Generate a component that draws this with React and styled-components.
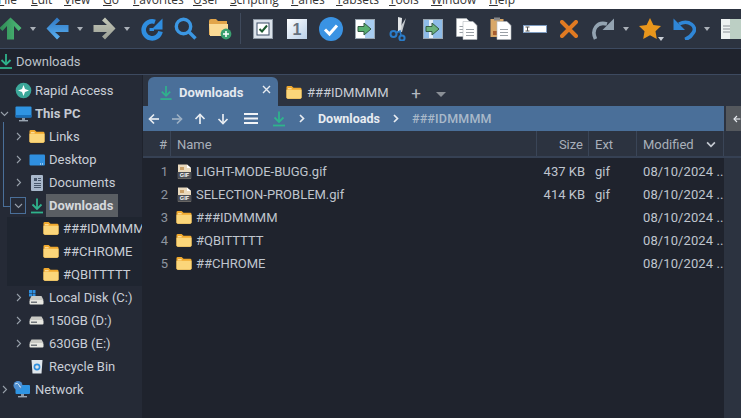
import React from 'react';
import styled, { createGlobalStyle } from 'styled-components';

const Global = createGlobalStyle`
  html, body { margin: 0; padding: 0; height: 100%; overflow: hidden; background: #252a36; }
  #root { height: 100%; }
  * { box-sizing: border-box; }
`;
const Page = styled.div`
  width: 741px; height: 418px; display: flex; flex-direction: column; overflow: hidden;
  font-family: Roboto, "Open Sans", sans-serif; font-size: 13px; color: #c9ced6; background: #252a36;
`;
const MenuBar = styled.div`
  height: 9px; flex: none; background: #fff; display: flex; align-items: flex-end; overflow: hidden;
  font-family: "Open Sans", sans-serif; font-size: 12px; color: #333;
`;
const MenuItem = styled.span`
  flex: none; width: ${p => p.$w}px; margin-left: ${p => p.$ml || 0}px; line-height: 16px; margin-bottom: 1px; white-space: nowrap;
  &::first-letter { text-decoration: underline; }
`;
const Toolbar = styled.div`
  height: 40px; flex: none; background: #2c3340; border-bottom: 1px solid #3d4a60; display: flex; align-items: center; overflow: hidden;
`;
const Tool = styled.div`
  flex: none; position: relative; width: ${p => p.$w}px; margin-left: ${p => p.$ml || 0}px; height: 24px; display: flex; align-items: center; justify-content: center;
  svg { display: block; flex: none; }
`;
const Caret = styled.span`
  flex: none; margin-left: ${p => p.$ml}px; width: 0; height: 0; border-left: 3.5px solid transparent; border-right: 3.5px solid transparent; border-top: 4px solid #aab0b8;
`;
const StarCaret = styled(Caret)`
  position: absolute; right: -3px; bottom: 0; margin: 0; border-top-color: #c9ced6;
`;
const ToolSep = styled.span`
  flex: none; width: 1px; height: 31px; background: #3f4a5c; margin-left: ${p => p.$ml}px;
`;
const LocationBar = styled.div`
  height: 26px; flex: none; background: #1f232d; border-bottom: 1px solid #3d4a60; display: flex; align-items: center; gap: 4px; color: #bcc2ca; font-size: 13px;
`;
const Main = styled.div`
  flex: 1; min-height: 0; display: flex;
`;
const Sidebar = styled.nav`
  width: 143px; flex: none; padding-top: 4px; background: #252a36; border-right: 1px solid #1f232d; position: relative; overflow: hidden;
`;
const TreeRow = styled.div`
  height: 23px; display: flex; align-items: center; white-space: nowrap; padding-left: ${p => p.$indent}px; gap: ${p => p.$gap ?? 6}px;
  svg { flex: none; }
`;
const Nested = styled.div`
  background: #1f2530; margin-left: 7px;
`;
const Chevron = styled.span`
  flex: none; width: 12px; display: flex; justify-content: center; margin-right: ${p => p.$mr ?? 0}px; margin-left: ${p => p.$ml ?? 0}px;
`;
const TreeLine = styled.span`
  position: absolute; left: 3px; top: 47px; width: 7px; height: 85px; border-left: 1px solid #4a6f99; border-bottom: 1px solid #4a6f99;
`;
const ExpandBox = styled.span`
  flex: none; width: 16px; height: 17px; margin-left: 3px; margin-right: 5px; border: 1px solid #4a6f99; display: flex; align-items: center; justify-content: center;
`;
const Label = styled.span`
  margin-left: ${p => p.$ml}px;
`;
const Bold = styled.b`
  font-weight: 700; color: #c5cad2; margin-left: 3px;
`;
const SelectedLabel = styled.b`
  font-weight: 700; background: #5a5e63; color: #d5d8dc; height: 23px; line-height: 23px; padding: 0 0 0 3px; margin-left: 3px; width: 72px;
`;
const Content = styled.section`
  flex: 1; min-width: 0; display: flex; flex-direction: column; background: #2c3340;
`;
const TabStrip = styled.div`
  height: 31px; flex: none; display: flex; align-items: flex-end; padding-left: 5px;
`;
const ActiveTab = styled.div`
  width: 130px; height: 29px; flex: none; background: #4a6f99; border-radius: 6px 6px 0 0; display: flex; align-items: center; padding: 2px 0 0 12px; gap: 7px; font-weight: 700; color: #e4e9ef; position: relative;
`;
const TabClose = styled.span`
  position: absolute; right: 7px; top: 8px; display: flex;
`;
const Tab = styled.div`
  flex: none; width: 125px; height: 29px; display: flex; align-items: center; gap: 5px; padding: 2px 0 0 8px; color: #c9ced6; font-size: 13px;
`;
const TabPlus = styled.span`
  flex: none; width: 26px; text-align: center; height: 29px; line-height: 33px; font-size: 17px; color: #b4b9c1;
`;
const TabMenuCaret = styled.span`
  flex: none; margin: 0 0 9px 7px; width: 0; height: 0; border-left: 5px solid transparent; border-right: 5px solid transparent; border-top: 5px solid #8a8f96;
`;
const Crumbs = styled.div`
  height: 25px; flex: none; display: flex;
`;
const CrumbBar = styled.div`
  width: 581px; flex: none; background: #4a6f99; display: flex; align-items: center; color: #e8ecf1;
  svg { flex: none; display: block; }
`;
const CrumbSlot = styled.span`
  flex: none; width: ${p => p.$w}px; margin-left: ${p => p.$ml || 0}px; display: flex; justify-content: center;
`;
const CrumbText = styled.span`
  flex: none; font-weight: ${p => p.$dim ? 500 : 700}; color: ${p => p.$dim ? '#a9b9c9' : '#e8ecf1'}; font-size: 12.5px; letter-spacing: ${p => p.$dim ? '.2px' : 0};
  margin-left: ${p => p.$ml}px;
`;
const CrumbBack = styled.div`
  margin-left: 2px; flex: 1; background: #54585d; display: flex; align-items: center; padding-left: 7px; overflow: hidden;
`;
const Grid = styled.div`
  flex: 1; display: flex; flex-direction: column; min-height: 0;
`;
const HeadRow = styled.div`
  height: 27px; flex: none; display: grid; grid-template-columns: 28px 366px 52px 48px 87px; border-bottom: 2px solid #364154; color: #a9b0ba;
`;
const HeadCell = styled.div`
  display: flex; align-items: center; padding: 2px ${p => p.$pr ?? 6}px 0 6px; border-right: 1px solid #3a4557; justify-content: ${p => p.$right ? 'flex-end' : 'flex-start'}; position: relative;
`;
const SortMark = styled.span`
  position: absolute; right: 7px; top: 8px; display: flex;
`;
const Body = styled.div`
  width: 581px; flex: 1; background: #1f232d; padding-top: 2px;
`;
const Row = styled.div`
  height: 23px; display: grid; grid-template-columns: 28px 366px 52px 48px 87px; align-items: center; white-space: nowrap;
`;
const Num = styled.span`
  text-align: right; padding-right: 3px; color: #8e95a0;
`;
const NameCell = styled.span`
  display: flex; align-items: center; gap: ${p => p.$gap}px; padding-left: ${p => p.$pad}px; color: #bfc5cd;
  svg { flex: none; }
`;
const SizeCell = styled.span`
  text-align: right; padding-right: 4px; color: #bfc5cd;
`;
const ExtCell = styled.span`
  padding-left: 6px; color: #bfc5cd;
`;
const DateCell = styled.span`
  padding-left: 6px; color: #bfc5cd; overflow: hidden; letter-spacing: .1px;
`;

const Folder = ({ s = 17 }) => (
  <svg width={s} height={s * 15 / 17} viewBox="0 0 17 15">
    <path d="M0.5 2.5 Q0.5 1 2 1 H6 L8 3 H15 Q16.5 3 16.5 4.5 V13 Q16.5 14.5 15 14.5 H2 Q0.5 14.5 0.5 13Z" fill="#f0a92e" />
    <path d="M0.5 5 H16.5 V13 Q16.5 14.5 15 14.5 H2 Q0.5 14.5 0.5 13Z" fill="#fbd67a" />
    <path d="M2 4 H6" stroke="#fff1c4" strokeWidth="1" />
  </svg>
);
const Dl = ({ w = 12, h = 15, c = '#2fb38c' }) => (
  <svg width={w} height={h} viewBox="0 0 12 15" fill="none" stroke={c} strokeWidth="1.8">
    <path d="M6 0 V10.5" />
    <path d="M1.5 6 L6 10.5 L10.5 6" />
    <path d="M0 14 H12" />
  </svg>
);
const ChevR = ({ c = '#98a0aa', s = 9, w = 1.1 }) => (
  <svg width={s} height={s} viewBox="0 0 9 9" fill="none" stroke={c} strokeWidth={w}><path d="M3 1 L6.5 4.5 L3 8" /></svg>
);
const ChevD = ({ c = '#98a0aa', w = 1.1, s = 9 }) => (
  <svg width={s} height={s} viewBox="0 0 9 9" fill="none" stroke={c} strokeWidth={w}><path d="M1 3 L4.5 6.5 L8 3" /></svg>
);
const Drive = () => (
  <svg width="15" height="9" viewBox="0 0 15 9">
    <path d="M2.5 0.5 H12.5 L14.5 4 H0.5Z" fill="#c9c9c4" />
    <rect x="0.5" y="4" width="14" height="4.5" rx="1" fill="#e8e8e2" />
    <rect x="2" y="5.5" width="6" height="1.5" fill="#70757a" />
  </svg>
);
const Gif = () => (
  <svg width="15" height="15" viewBox="0 0 15 15">
    <path d="M1 0.5 H10 L14 4 V14.5 H1Z" fill="#e9d9bd" />
    <path d="M10 0.5 V4 H14Z" fill="#fff" />
    <rect x="3" y="3" width="4" height="3" fill="#c9a068" />
    <rect x="0.5" y="8" width="14" height="6.5" fill="#4a4d52" />
    <text x="7.5" y="13.4" textAnchor="middle" fontSize="5.6" fontWeight="700" fontFamily="Liberation Sans" fill="#fff">GIF</text>
  </svg>
);
const Arrow = ({ dir = 'left', c, s = 12, w = 1.7 }) => {
  const rot = { left: 0, right: 180, up: 90, down: 270 }[dir];
  return (
    <svg width={s} height={s} viewBox="0 0 12 12" fill="none" stroke={c} strokeWidth={w} style={{ transform: `rotate(${rot}deg)` }}>
      <path d="M11 6 H1.5" /><path d="M6 1.5 L1.5 6 L6 10.5" />
    </svg>
  );
};
const BigArrow = ({ id, c1, c2, rot = 0 }) => (
  <svg width="23" height="23" viewBox="0 0 23 23" style={{ transform: `rotate(${rot}deg)` }}>
    <defs>
      <linearGradient id={id} x1="0" y1="0" x2="0" y2="1"><stop offset="0" stopColor={c1} /><stop offset="1" stopColor={c2} /></linearGradient>
    </defs>
    <path d="M0.5 11.5 L11 0.5 L14 3.5 L9 8 H22.5 V15 H9 L14 19.5 L11 22.5Z" fill={`url(#${id})`} />
  </svg>
);
const Refresh = () => (
  <svg width="24" height="24" viewBox="0 0 24 24" fill="none">
    <path d="M20.5 14.5 A8.5 8.5 0 1 1 15 4.8" stroke="#2f8ee0" strokeWidth="4.6" />
    <path d="M22.5 1.5 V12.5 H11.5Z" fill="#2f8ee0" />
    <path d="M9.5 12.5 H14" stroke="#2f8ee0" strokeWidth="3" />
  </svg>
);
const Search = () => (
  <svg width="23" height="23" viewBox="0 0 23 23" fill="none" stroke="#3b97e3">
    <circle cx="9.5" cy="9.5" r="7.2" strokeWidth="3.4" />
    <path d="M15 15 L21.5 21.5" strokeWidth="3.4" />
  </svg>
);
const FolderPlus = () => (
  <svg width="24" height="22" viewBox="0 0 24 22">
    <path d="M1 3 Q1 1 3 1 H8 L10 3 H19 V17 H1Z" fill="#e2a54a" />
    <path d="M1 6 H20 V18 H2Z" fill="#fbdb96" />
    <circle cx="18" cy="16" r="5.4" fill="#3ba070" />
    <path d="M18 13 V19 M15 16 H21" stroke="#fff" strokeWidth="1.6" />
  </svg>
);
const CheckBox = () => (
  <svg width="20" height="20" viewBox="0 0 20 20">
    <rect x="0.5" y="0.5" width="19" height="19" fill="#dbe2ea" stroke="#8f9aa6" />
    <rect x="4" y="4" width="12" height="12" fill="#fff" stroke="#3a4c66" />
    <path d="M6.5 10 L9 12.5 L14 6.5" fill="none" stroke="#1c5a30" strokeWidth="2" />
  </svg>
);
const One = () => (
  <svg width="20" height="20" viewBox="0 0 20 20">
    <defs><linearGradient id="onebg" x1="0" y1="0" x2="1" y2="1"><stop offset="0" stopColor="#fff" /><stop offset="1" stopColor="#b9cfe8" /></linearGradient></defs>
    <rect width="20" height="20" fill="url(#onebg)" />
    <text x="10" y="16" textAnchor="middle" fontSize="16" fontWeight="700" fontFamily="Liberation Sans" fill="#66717e">1</text>
  </svg>
);
const CheckCircle = () => (
  <svg width="24" height="24" viewBox="0 0 24 24">
    <circle cx="12" cy="12" r="12" fill="#3a93e3" />
    <path d="M6 12.5 L10.5 17 L18 8.5" fill="none" stroke="#fff" strokeWidth="3" />
  </svg>
);
const DocArrow = () => (
  <svg width="20" height="20" viewBox="0 0 20 20">
    <rect x="0.5" y="0.5" width="19" height="19" fill="#a8cdf0" stroke="#9aa7b2" />
    <rect x="1" y="1" width="9" height="18" fill="#fff" />
    <path d="M3 7.5 H9 V4 L16 10 L9 16 V12.5 H3Z" fill="#58b070" stroke="#335a42" />
  </svg>
);
const Scissors = () => (
  <svg width="20" height="24" viewBox="0 0 20 24" fill="none">
    <path d="M8 15 L17 1 L13 15Z" fill="#c3c8cc" />
    <path d="M9 0 L13 1 L12 15 L9 15Z" fill="#e3e6e8" />
    <circle cx="4.5" cy="17" r="3" stroke="#2a7cc9" strokeWidth="2" />
    <circle cx="13" cy="21" r="2.6" stroke="#2a7cc9" strokeWidth="2" />
    <path d="M7 16 L11 14 L12 18" stroke="#2a7cc9" strokeWidth="1.6" />
  </svg>
);
const Sync = () => (
  <svg width="20" height="20" viewBox="0 0 20 20">
    <rect x="0.5" y="0.5" width="19" height="19" fill="#8ebce8" stroke="#9aa7b2" />
    <rect x="6" y="1" width="4" height="18" fill="#e4eef7" />
    <path d="M3 7.5 H9 V4 L16 10 L9 16 V12.5 H3Z" fill="#6bb27c" stroke="#335a42" />
  </svg>
);
const Page1 = ({ x, y }) => (
  <g>
    <path d={`M${x} ${y} H${x + 10} L${x + 14} ${y + 4} V${y + 18} H${x}Z`} fill="#fff" stroke="#b3b8bc" strokeWidth=".6" />
    <path d={`M${x + 3} ${y + 8} H${x + 11} M${x + 3} ${y + 11} H${x + 11} M${x + 3} ${y + 14} H${x + 11}`} stroke="#9aa0a6" />
  </g>
);
const Copy = () => (
  <svg width="22" height="22" viewBox="0 0 22 22"><Page1 x={0.5} y={0.5} /><Page1 x={7} y={3.5} /></svg>
);
const Paste = () => (
  <svg width="22" height="23" viewBox="0 0 22 23">
    <rect x="0.5" y="2" width="13" height="18" fill="#d9a868" />
    <rect x="4" y="0.5" width="6" height="3" fill="#888" />
    <rect x="3" y="14" width="4" height="4" fill="#a85e30" />
    <Page1 x={7} y={4.5} />
  </svg>
);
const Rename = () => (
  <svg width="24" height="8" viewBox="0 0 24 8">
    <rect x="0.5" y="0.5" width="23" height="7" fill="#fff" stroke="#7e9cc0" />
    <path d="M2.5 2 H6.5 M2.5 6 H6.5 M4.5 2 V6" stroke="#555" />
  </svg>
);
const Cross = () => (
  <svg width="18" height="18" viewBox="0 0 18 18"><path d="M2 2 L16 16 M16 2 L2 16" stroke="#e07a22" strokeWidth="4" strokeLinecap="round" /></svg>
);
const Redo = () => (
  <svg width="23" height="22" viewBox="0 0 23 22" fill="none">
    <path d="M3.5 21 C-1 12 5 3 15 6" stroke="#93a3b1" strokeWidth="3.6" />
    <path d="M22 0.5 V12 H10.5Z" fill="#93a3b1" />
  </svg>
);
const Undo = () => (
  <svg width="23" height="22" viewBox="0 0 23 22" fill="none">
    <path d="M6 6 C16 1 25 9 20 15 C18 18.5 15 20.5 12 21.5" stroke="#2f86d6" strokeWidth="3.6" />
    <path d="M0.5 0.5 V12 H12Z" fill="#2f86d6" />
  </svg>
);
const Star = () => (
  <svg width="22" height="21" viewBox="0 0 22 21"><path d="M11 0 L14.4 7 L22 8 L16.5 13.3 L17.8 21 L11 17.3 L4.2 21 L5.5 13.3 L0 8 L7.6 7Z" fill="#e8961c" /></svg>
);
const DocPanel = () => (
  <svg width="20" height="20" viewBox="0 0 20 20">
    <rect width="20" height="20" fill="#eef2f2" />
    <rect x="9" width="11" height="20" fill="#bccfc4" />
    <path d="M2 7 H9 M2 10 H9 M2 13 H9" stroke="#8a9096" />
  </svg>
);
const Badge = () => (
  <svg width="17" height="17" viewBox="0 0 17 17">
    <circle cx="8.5" cy="8.5" r="7.8" fill="#3ca89a" />
    <path d="M8.5 3 L10 7 L14 8.5 L10 10 L8.5 14 L7 10 L3 8.5 L7 7Z" fill="#fff" />
  </svg>
);
const Monitor = () => (
  <svg width="17" height="16" viewBox="0 0 17 16">
    <rect x="0.5" y="0.5" width="16" height="11" rx="1" fill="#2f94e2" />
    <path d="M0.5 9 H16.5 V11.5 H0.5Z" fill="#1a6fb8" />
    <rect x="7" y="12" width="3" height="2" fill="#8a97a6" />
    <rect x="4" y="14" width="9" height="1.4" fill="#9aa6b3" />
  </svg>
);
const DesktopIcon = () => (
  <svg width="16" height="12" viewBox="0 0 16 12">
    <rect x="0.5" y="0.5" width="15.5" height="11" rx="1" fill="#2f8fdf" />
    <rect x="11" y="9.5" width="1" height="1" fill="#fff" /><rect x="13" y="9.5" width="1" height="1" fill="#fff" />
  </svg>
);
const DocsIcon = () => (
  <svg width="12" height="16" viewBox="0 0 12 16">
    <rect width="12" height="16" rx="1" fill="#a9b8cb" />
    <rect x="3" y="3" width="3" height="3" fill="#47566b" />
    <path d="M7 3.5 H10 M7 5.5 H10 M3 8.5 H10 M3 10.5 H10 M3 12.5 H10" stroke="#47566b" />
  </svg>
);
const SysDrive = () => (
  <svg width="15" height="15" viewBox="0 0 15 15">
    <rect x="0" y="0" width="3" height="3" fill="#2f8fdf" /><rect x="3.5" y="0" width="3" height="3" fill="#2f8fdf" />
    <rect x="0" y="3.5" width="3" height="3" fill="#2f8fdf" /><rect x="3.5" y="3.5" width="3" height="3" fill="#2f8fdf" />
    <path d="M2.5 6 H12.5 L14.5 10 H0.5Z" fill="#c9c9c4" />
    <rect x="0.5" y="10" width="14" height="4.5" rx="1" fill="#e8e8e2" />
    <rect x="2" y="11.5" width="6" height="1.5" fill="#70757a" />
  </svg>
);
const Bin = () => (
  <svg width="12" height="15" viewBox="0 0 12 15">
    <path d="M0.5 1 H11.5 L10.5 14.5 H1.5Z" fill="#dfe6ec" />
    <circle cx="6" cy="8" r="2.6" fill="none" stroke="#2f8fdf" strokeWidth="1.6" />
  </svg>
);
const Net = () => (
  <svg width="17" height="17" viewBox="0 0 17 17">
    <rect x="2.5" y="4" width="14.5" height="9" rx="1" fill="#2f94e2" />
    <rect x="8" y="13" width="3" height="2" fill="#8a97a6" />
    <rect x="5" y="15" width="9" height="1.4" fill="#9aa6b3" />
    <circle cx="5" cy="4.5" r="4.5" fill="#4e8ed0" />
    <path d="M2 3 Q5 1 6 4 T8 6" stroke="#cfe3f5" fill="none" />
  </svg>
);

const menus = [['File', 33, -2], ['Edit', 33], ['View', 39], ['Go', 30], ['Favorites', 60], ['User', 37], ['Scripting', 61], ['Panes', 45], ['Tabsets', 53], ['Tools', 42], ['Window', 58], ['Help', 40]];

const tools = [
  [<BigArrow key="u" id="gu" c1="#4ebb78" c2="#2f8a55" rot={90} />, 23, -1], 'c',
  [<BigArrow key="b" id="gb" c1="#2f78c4" c2="#5ab0f0" />, 23, 10], 'c',
  [<BigArrow key="f" id="gf" c1="#9a9e94" c2="#c4c8b8" rot={180} />, 23, 10], 'c',
  [<Refresh key="r" />, 24, 10],
  [<Search key="s" />, 23, 10],
  [<FolderPlus key="fp" />, 24, 11],
  'sep',
  [<CheckBox key="cb" />, 20, 12],
  [<One key="o" />, 20, 14],
  [<CheckCircle key="cc" />, 24, 12],
  [<DocArrow key="da" />, 20, 12],
  [<Scissors key="sc" />, 20, 14],
  [<Sync key="sy" />, 20, 14],
  [<Copy key="cp" />, 22, 13],
  [<Paste key="pa" />, 22, 12],
  [<Rename key="rn" />, 24, 11],
  [<Cross key="x" />, 18, 13],
  [<Redo key="rd" />, 23, 14], 'c',
  [<React.Fragment key="st"><Star /><StarCaret /></React.Fragment>, 22, 10],
  [<Undo key="ud" />, 23, 12], 'c',
  [<DocPanel key="dp" />, 20, 11],
];

const files = [
  ['1', 'LIGHT-MODE-BUGG.gif', '437 KB', 'gif'],
  ['2', 'SELECTION-PROBLEM.gif', '414 KB', 'gif'],
  ['3', '###IDMMMM'],
  ['4', '#QBITTTTT'],
  ['5', '##CHROME'],
];

export default function App() {
  return (
    <Page>
      <Global />
      <MenuBar>
        {menus.map(([m, w, o]) => <MenuItem key={m} $w={w} $ml={o}>{m}</MenuItem>)}
      </MenuBar>
      <Toolbar>
        {tools.map((t, i) => {
          if (t === 'c') return <Caret key={i} $ml={8} />;
          if (t === 'sep') return <ToolSep key={i} $ml={8} />;
          return <Tool key={i} $w={t[1]} $ml={t[2]}>{t[0]}</Tool>;
        })}
      </Toolbar>
      <LocationBar>
        <Dl />
        <span>Downloads</span>
      </LocationBar>
      <Main>
        <Sidebar>
          <TreeLine />
          <TreeRow $indent={15} $gap={3}><Badge /><span>Rapid Access</span></TreeRow>
          <TreeRow $indent={0} $gap={0}><Chevron $mr={5} $ml={-2}><ChevD /></Chevron><Monitor /><Bold>This PC</Bold></TreeRow>
          <TreeRow $indent={12} $gap={0}><Chevron $mr={5}><ChevR /></Chevron><Folder s={16} /><Label $ml={4}>Links</Label></TreeRow>
          <TreeRow $indent={12} $gap={0}><Chevron $mr={5}><ChevR /></Chevron><DesktopIcon /><Label $ml={4}>Desktop</Label></TreeRow>
          <TreeRow $indent={12} $gap={0}><Chevron $mr={7}><ChevR /></Chevron><DocsIcon /><Label $ml={6}>Documents</Label></TreeRow>
          <TreeRow $indent={7} $gap={0}>
            <ExpandBox><ChevD /></ExpandBox>
            <Dl h={16} />
            <SelectedLabel>Downloads</SelectedLabel>
          </TreeRow>
          <Nested>
            {['###IDMMMM', '##CHROME', '#QBITTTTT'].map(n => (
              <TreeRow key={n} $indent={36} $gap={4}><Folder s={16} /><span>{n}</span></TreeRow>
            ))}
          </Nested>
          <TreeRow $indent={12} $gap={0}><Chevron $mr={5}><ChevR /></Chevron><SysDrive /><Label $ml={5}>Local Disk (C:)</Label></TreeRow>
          <TreeRow $indent={12} $gap={0}><Chevron $mr={5}><ChevR /></Chevron><Drive /><Label $ml={5}>150GB (D:)</Label></TreeRow>
          <TreeRow $indent={12} $gap={0}><Chevron $mr={5}><ChevR /></Chevron><Drive /><Label $ml={5}>630GB (E:)</Label></TreeRow>
          <TreeRow $indent={31} $gap={6}><Bin /><span>Recycle Bin</span></TreeRow>
          <TreeRow $indent={0} $gap={0}><Chevron $mr={3} $ml={-2}><ChevR /></Chevron><Net /><Label $ml={5}>Network</Label></TreeRow>
        </Sidebar>
        <Content>
          <TabStrip>
            <ActiveTab>
              <Dl h={14} /><span>Downloads</span>
              <TabClose><svg width="9" height="9" viewBox="0 0 9 9"><path d="M1 1 L8 8 M8 1 L1 8" stroke="#e8ecf1" strokeWidth="1.4" /></svg></TabClose>
            </ActiveTab>
            <Tab><Folder s={16} /><span>###IDMMMM</span></Tab>
            <TabPlus>+</TabPlus>
            <TabMenuCaret />
          </TabStrip>
          <Crumbs>
            <CrumbBar>
              <CrumbSlot $w={12} $ml={5}><Arrow c="#e8ecf1" /></CrumbSlot>
              <CrumbSlot $w={12} $ml={11}><Arrow dir="right" c="#9db0c4" /></CrumbSlot>
              <CrumbSlot $w={12} $ml={11}><Arrow dir="up" c="#e8ecf1" /></CrumbSlot>
              <CrumbSlot $w={12} $ml={11}><Arrow dir="down" c="#e8ecf1" /></CrumbSlot>
              <CrumbSlot $w={14} $ml={15}>
                <svg width="14" height="11" viewBox="0 0 14 11" fill="none" stroke="#f2f4f7" strokeWidth="2"><path d="M0 1 H14 M0 5.5 H14 M0 10 H14" /></svg>
              </CrumbSlot>
              <CrumbSlot $w={12} $ml={15}><Dl h={16} /></CrumbSlot>
              <CrumbSlot $w={9} $ml={12}><ChevR c="#e8ecf1" w={1.7} /></CrumbSlot>
              <CrumbText $ml={12}>Downloads</CrumbText>
              <CrumbSlot $w={9} $ml={11}><ChevR c="#e8ecf1" w={1.7} /></CrumbSlot>
              <CrumbText $dim $ml={12}>###IDMMMM</CrumbText>
            </CrumbBar>
            <CrumbBack><Arrow c="#e8ecf1" /></CrumbBack>
          </Crumbs>
          <Grid>
            <HeadRow>
              <HeadCell $right $pr={3}>#</HeadCell>
              <HeadCell>Name</HeadCell>
              <HeadCell $right $pr={5}>Size</HeadCell>
              <HeadCell>Ext</HeadCell>
              <HeadCell>Modified<SortMark><ChevD c="#c5cad2" w={1.5} s={10} /></SortMark></HeadCell>
            </HeadRow>
            <Body>
              {files.map(([n, name, size, ext]) => (
                <Row key={n}>
                  <Num>{n}</Num>
                  {ext
                    ? <NameCell $pad={6} $gap={4}><Gif /><span>{name}</span></NameCell>
                    : <NameCell $pad={5} $gap={4}><Folder s={16} /><span>{name}</span></NameCell>}
                  <SizeCell>{size}</SizeCell>
                  <ExtCell>{ext}</ExtCell>
                  <DateCell>08/10/2024 ...</DateCell>
                </Row>
              ))}
            </Body>
          </Grid>
        </Content>
      </Main>
    </Page>
  );
}
